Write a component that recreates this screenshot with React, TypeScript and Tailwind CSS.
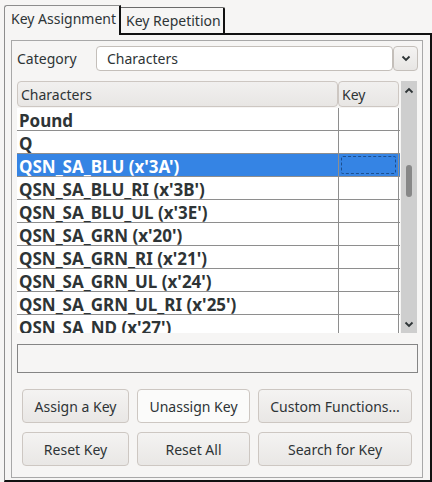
import React from 'react'

const rows = [
  'Pound',
  'Q',
  "QSN_SA_BLU (x'3A')",
  "QSN_SA_BLU_RI (x'3B')",
  "QSN_SA_BLU_UL (x'3E')",
  "QSN_SA_GRN (x'20')",
  "QSN_SA_GRN_RI (x'21')",
  "QSN_SA_GRN_UL (x'24')",
  "QSN_SA_GRN_UL_RI (x'25')",
  "QSN_SA_ND (x'27')",
]

const selected = 2

function Chevron({ up = false }: { up?: boolean }) {
  return (
    <svg width="10" height="7" viewBox="0 0 10 7" className="block">
      <path
        d={up ? 'M1.5 5.5 L5 2 L8.5 5.5' : 'M1.5 1.5 L5 5 L8.5 1.5'}
        fill="none"
        stroke="#2e3436"
        strokeWidth="1.8"
      />
    </svg>
  )
}

function Button({ label, w, hover = false }: { label: string; w: string; hover?: boolean }) {
  return (
    <button
      className={`${w} h-[34px] rounded-[4px] border border-[#cdc7c2] text-[14px] text-[#2e3436] flex items-center justify-center ${
        hover ? 'bg-[#fbfbfa]' : 'bg-gradient-to-b from-[#f4f3f2] to-[#e9e7e5]'
      }`}
    >
      {label}
    </button>
  )
}

export default function App() {
  return (
    <div
      className="w-[432px] h-[482px] overflow-hidden bg-[#f6f5f4] pt-[5px] pl-[4px] text-[#2e3436]"
      style={{ fontFamily: '"Noto Sans", "DejaVu Sans", sans-serif' }}
    >
      {/* tabs */}
      <div className="flex items-end h-[30px]">
        <div className="w-[117px] h-[30px] border-l border-t border-[#8d8d8d] border-r-2 border-r-[#111] rounded-tl-[3px] pl-[6px] pt-[3px] text-[14px] leading-[20px]">
          Key Assignment
        </div>
        <div className="w-[104px] h-[28px] border-t border-[#6a6a6a] border-r-2 border-r-[#111] border-b-2 border-b-[#111] rounded-tr-[2px] pl-[5px] pt-[3px] text-[14px] leading-[20px]">
          Key Repetition
        </div>
        <div className="flex-1 h-[2px] bg-[#111]" />
      </div>

      {/* panel */}
      <div className="h-[447px] border-l border-[#8d8d8d] border-r-2 border-r-[#111] border-b-2 border-b-[#111] pl-[6px] pr-[7px] pt-[5px]">
        <div className="h-[438px] border border-[#a8a8a8] pl-[5px] pr-[4px] pt-[5px] flex flex-col">
          {/* category */}
          <div className="flex items-center h-[25px]">
            <div className="w-[79px] text-[14px]">Category</div>
            <div className="flex-1 h-[25px] bg-white border border-[#c4bfba] rounded-[4px] pl-[10px] flex items-center text-[14px]">
              Characters
            </div>
            <div className="w-[25px] h-[25px] border border-[#c4bfba] rounded-[4px] bg-gradient-to-b from-[#f4f3f2] to-[#e8e6e4] flex items-center justify-center">
              <Chevron />
            </div>
          </div>

          {/* table */}
          <div className="flex mt-[10px] h-[252px]">
            <div className="w-[383px] flex flex-col">
              <div className="flex h-[26px] shrink-0">
                <div className="w-[321px] border border-[#cdc7c2] rounded-[4px] bg-gradient-to-b from-[#f1f0ef] to-[#e8e6e4] pl-[3px] flex items-center text-[14px]">
                  Characters
                </div>
                <div className="w-[61px] border border-[#cdc7c2] rounded-[4px] bg-gradient-to-b from-[#f1f0ef] to-[#e8e6e4] pl-[3px] flex items-center text-[14px]">
                  Key
                </div>
              </div>
              <div className="flex-1 bg-white overflow-hidden mt-[1px]">
                {rows.map((r, i) => (
                  <div
                    key={r}
                    className={`flex h-[23px] border-b border-[#8e8e8e] ${i === selected ? 'bg-[#3584e4] text-white' : ''}`}
                  >
                    <div className="w-[321px] pl-[2px] text-[17px] font-bold leading-[26px] whitespace-nowrap">{r}</div>
                    <div className="w-[61px] border-l border-r border-[#8e8e8e] p-[2px]">
                      {i === selected && (
                        <div className="h-full border border-dashed border-[#1c4f8f] rounded-[2px]" />
                      )}
                    </div>
                  </div>
                ))}
              </div>
            </div>
            <div className="w-[16px] ml-[1px] bg-[#cecece] flex flex-col items-center pt-[6px] pb-[5px]">
              <Chevron up />
              <div className="mt-[71px] w-[6px] h-[32px] rounded-[3px] bg-[#878787]" />
              <div className="flex-1" />
              <Chevron />
            </div>
          </div>

          {/* status */}
          <div className="mt-[11px] h-[29px] border border-[#858585] bg-[#f6f5f4]" />

          {/* buttons */}
          <div className="mt-[16px] pl-[5px] flex flex-col gap-[9px]">
            <div className="flex gap-[8px]">
              <Button label="Assign a Key" w="w-[107px]" />
              <Button label="Unassign Key" w="w-[113px]" hover />
              <Button label="Custom Functions..." w="w-[154px]" />
            </div>
            <div className="flex gap-[8px]">
              <Button label="Reset Key" w="w-[107px]" />
              <Button label="Reset All" w="w-[113px]" />
              <Button label="Search for Key" w="w-[154px]" />
            </div>
          </div>
        </div>
      </div>
    </div>
  )
}
